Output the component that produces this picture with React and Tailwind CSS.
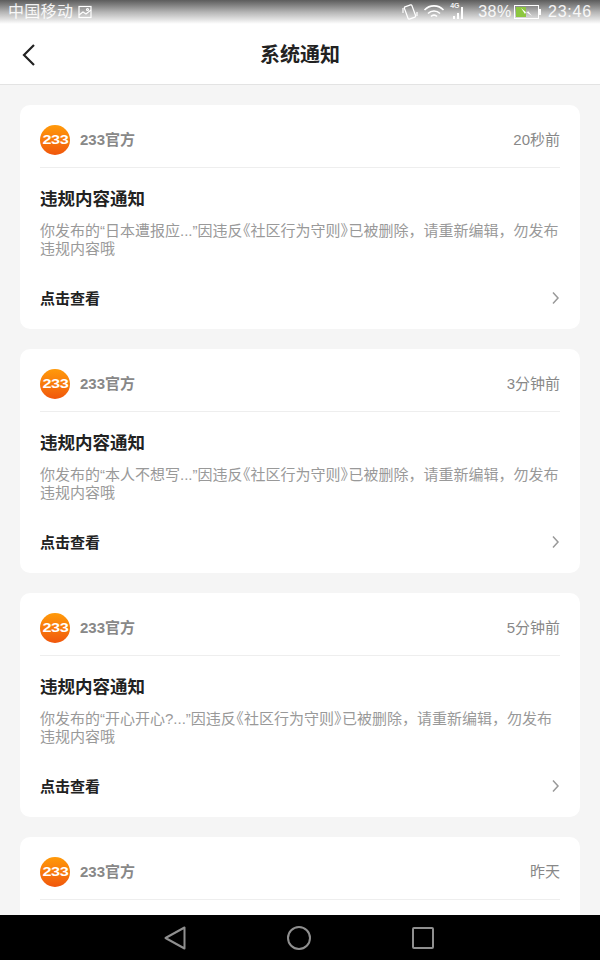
import React from 'react';

const FONT = '[font-family:"Liberation_Sans","Noto_Sans_CJK_SC",sans-serif]';

const notices = [
  { time: '20秒前', name: '日本遭报应...' },
  { time: '3分钟前', name: '本人不想写...' },
  { time: '5分钟前', name: '开心开心?...' },
];

// Status bar fades out into the white header
const StatusBar = () => (
  <div className="flex h-6 items-center justify-between bg-gradient-to-b from-[#5c5c5c] via-[#b4b4b4] to-white pl-2 pr-2 text-[16px] leading-6 text-white/90">
    <div className="flex items-center gap-[5px]">
      <span className="tracking-[0.3px]">中国移动</span>
      <svg width="14" height="14" viewBox="0 0 14 14" fill="none" stroke="white" strokeWidth="1.2">
        <rect x="1" y="1.500" width="12" height="11" />
        <path d="M1 10l4-3 3 2 5-4" />
        <circle cx="9.500" cy="4.500" r="1" />
      </svg>
    </div>
    <div className="flex items-center">
      <svg width="16" height="18" viewBox="0 0 16 18" fill="none" stroke="white" strokeWidth="1.2" className="mr-[5px]">
        <rect x="4" y="2.500" width="8" height="13" rx="1" transform="rotate(-20 8 9)" />
        <path d="M1 5v5M15 9v4" />
      </svg>
      <svg width="22" height="16" viewBox="0 0 22 16" fill="none" stroke="white" strokeWidth="1.6" className="mr-[4px]">
        <path d="M1.500 6a13 13 0 0 1 19 0" />
        <path d="M5 9.500a8.500 8.500 0 0 1 12 0" />
        <path d="M8 12.500a4 4 0 0 1 6 0" />
      </svg>
      <div className="relative mr-[12px] h-[18px] w-[17px]">
        <span className="absolute left-[1px] top-[-1px] text-[7px] leading-[8px] font-bold">4G</span>
        <svg width="16" height="18" viewBox="0 0 16 18" fill="white" className="absolute inset-0">
          <rect x="4" y="13" width="2" height="3" />
          <rect x="8" y="10" width="2" height="6" />
          <rect x="12" y="4" width="2" height="12" />
        </svg>
      </div>
      <span className="mr-[2px] tracking-[0.6px]">38%</span>
      <svg width="27" height="14" viewBox="0 0 27 14" className="mr-[7px]">
        <rect x="0.500" y="0.500" width="24" height="13" fill="none" stroke="white" />
        <rect x="2" y="2" width="10" height="10" fill="#8cc63f" />
        <rect x="25" y="4" width="2" height="6" fill="white" />
        <path d="M7 3l6 5 1-2 4 5-6-4-1 2z" fill="white" />
      </svg>
      <span className="tracking-[0.8px]">23:46</span>
    </div>
  </div>
);

const Logo = () => (
  <div className="flex h-[30px] w-[30px] items-center justify-center rounded-full bg-gradient-to-b from-[#ff9a0a] to-[#f0560c]">
    <span className="scale-x-125 text-[13px] leading-none font-bold tracking-[-0.3px] text-white [font-family:'Liberation_Sans',sans-serif]">233</span>
  </div>
);

const NoticeHeader = ({ time }) => (
  <div className="flex h-[63px] items-center justify-between border-b border-[#eeeeee] pt-[7px]">
    <div className="flex items-center gap-[10px]">
      <Logo />
      <span className="pt-[1px] text-[15px] font-bold text-[#888888]">233官方</span>
    </div>
    <span className="pt-[1px] text-[15px] text-[#888888]">{time}</span>
  </div>
);

const NoticeCard = ({ time, name }) => (
  <div className="h-[224px] shrink-0 rounded-[10px] bg-white px-5">
    <NoticeHeader time={time} />
    {name && (
      <>
        <h2 className="mt-[20px] text-[17.5px] leading-[22px] font-bold text-[#222222]">违规内容通知</h2>
        <p className="mt-[12px] h-[36px] text-[15px] leading-[18px] text-[#999999]">
          你发布的“{name}”因违反<span className="ml-[-7px]">《</span>社区行为守则<span className="mr-[-7px]">》</span>已被删除，请重新编辑，勿发布违规内容哦
        </p>
        <div className="mt-[31px] flex items-center justify-between">
          <span className="text-[15px] leading-[20px] font-bold text-[#222222]">点击查看</span>
          <svg width="9" height="14" viewBox="0 0 9 14" fill="none" stroke="#999999" strokeWidth="1.500" className="mt-[-3px]">
            <path d="M2 1.500l5 5.500-5 5.500" />
          </svg>
        </div>
      </>
    )}
  </div>
);

const NavBar = () => (
  <div className="flex h-[45px] shrink-0 items-center justify-center gap-[101px] bg-black pr-[2px]">
    <svg width="22" height="24" viewBox="0 0 22 24" fill="none" stroke="#8f8f8f" strokeWidth="2" strokeLinejoin="round">
      <path d="M20.500 1.500v21L1.500 12z" />
    </svg>
    <svg width="24" height="24" viewBox="0 0 24 24" fill="none" stroke="#8f8f8f" strokeWidth="2">
      <circle cx="12" cy="12" r="11" />
    </svg>
    <svg width="22" height="22" viewBox="0 0 22 22" fill="none" stroke="#8f8f8f" strokeWidth="2" strokeLinejoin="round">
      <rect x="1" y="1" width="20" height="20" rx="1" />
    </svg>
  </div>
);

export default function App() {
  return (
    <div className={`flex h-[960px] w-[600px] flex-col overflow-hidden bg-[#f5f5f5] ${FONT}`}>
      <header className="h-[85px] shrink-0 border-b border-[#e3e3e3] bg-white">
        <StatusBar />
        <div className="relative flex h-[60px] items-center justify-center pt-[2px]">
          <svg width="16" height="24" viewBox="0 0 16 24" fill="none" stroke="#222222" strokeWidth="2.200" className="absolute left-[21px] top-[19px]">
            <path d="M13 2L3 12l10 10" />
          </svg>
          <h1 className="text-[20px] font-bold text-[#222222]">系统通知</h1>
        </div>
      </header>
      <main className="flex min-h-0 flex-1 flex-col gap-5 overflow-hidden px-5 pt-5">
        {notices.map((n) => (
          <NoticeCard key={n.time} time={n.time} name={n.name} />
        ))}
        <NoticeCard time="昨天" />
      </main>
      <NavBar />
    </div>
  );
}
